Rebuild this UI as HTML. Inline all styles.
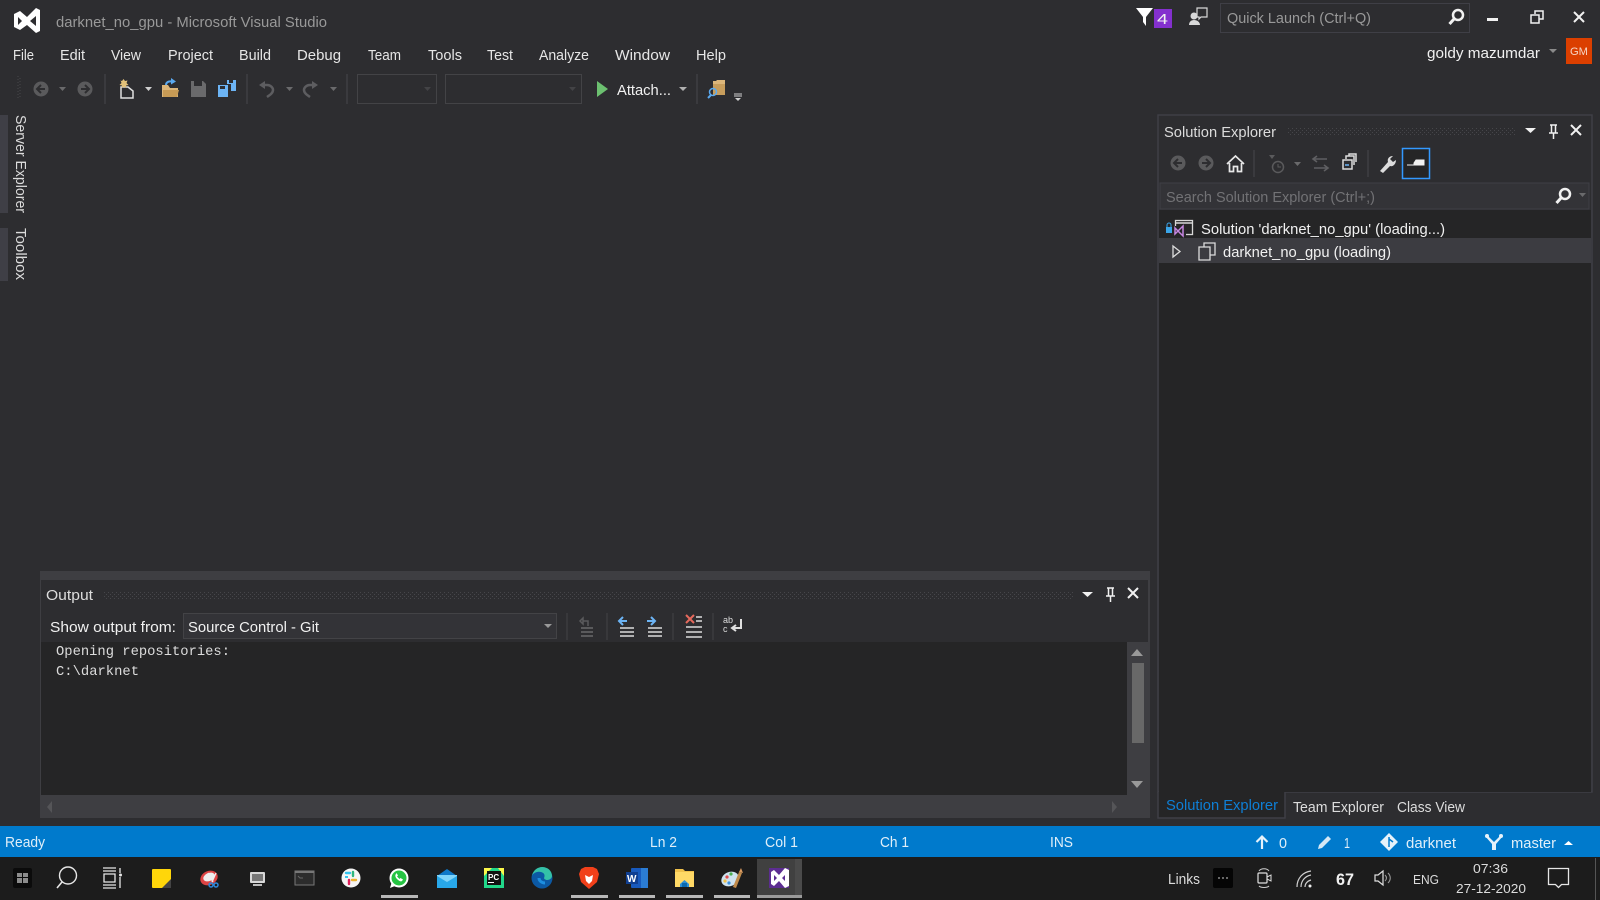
<!DOCTYPE html>
<html><head><meta charset="utf-8"><title>darknet_no_gpu - Microsoft Visual Studio</title>
<style>
html,body{margin:0;padding:0;background:#2d2d30;width:1600px;height:900px;overflow:hidden}
svg{display:block}
text{font-family:"Liberation Sans",sans-serif;font-size:15px;fill:#f1f1f1}
.m{fill:#e6e6e6}
.g{fill:#999}
.w{fill:#f1f1f1}
.d{fill:#dcdcdc}
.s{fill:#fff;fill-opacity:.88}
.t{fill:#e8e8e8}
.mono{font-family:"Liberation Mono",monospace;font-size:14px;fill:#dcdcdc}
</style></head><body>
<svg xmlns="http://www.w3.org/2000/svg" width="1600" height="900" viewBox="0 0 1600 900">
<defs>
<pattern id="dots" width="4" height="4" patternUnits="userSpaceOnUse"><rect width="1" height="1" fill="#46464a"/><rect x="2" y="2" width="1" height="1" fill="#46464a"/></pattern>
</defs>
<rect width="1600" height="900" fill="#2d2d30"/>

<!-- title -->
<path fill="#fff" fill-rule="evenodd" d="M14 14L20 11L27 17L36 8L40 10V31L36 33L27 25L20 30L14 27ZM18 17V25L22 21ZM30 21L36 26V16Z"/>
<text x="56" y="27" class="g" textLength="271" lengthAdjust="spacingAndGlyphs">darknet_no_gpu - Microsoft Visual Studio</text>

<!-- menu -->
<g class="m">
<text class="m" x="13" y="60" textLength="21" lengthAdjust="spacingAndGlyphs">File</text>
<text class="m" x="60" y="60" textLength="25" lengthAdjust="spacingAndGlyphs">Edit</text>
<text class="m" x="111" y="60" textLength="30" lengthAdjust="spacingAndGlyphs">View</text>
<text class="m" x="168" y="60" textLength="45" lengthAdjust="spacingAndGlyphs">Project</text>
<text class="m" x="239" y="60" textLength="32" lengthAdjust="spacingAndGlyphs">Build</text>
<text class="m" x="297" y="60" textLength="44" lengthAdjust="spacingAndGlyphs">Debug</text>
<text class="m" x="368" y="60" textLength="33" lengthAdjust="spacingAndGlyphs">Team</text>
<text class="m" x="428" y="60" textLength="34" lengthAdjust="spacingAndGlyphs">Tools</text>
<text class="m" x="487" y="60" textLength="26" lengthAdjust="spacingAndGlyphs">Test</text>
<text class="m" x="539" y="60" textLength="50" lengthAdjust="spacingAndGlyphs">Analyze</text>
<text class="m" x="615" y="60" textLength="55" lengthAdjust="spacingAndGlyphs">Window</text>
<text class="m" x="696" y="60" textLength="30" lengthAdjust="spacingAndGlyphs">Help</text>
</g>

<!-- main toolbar -->
<path d="M18 76v24M20 78v20" stroke="#46464a" stroke-width="1" stroke-dasharray="1 2"/>
<circle cx="41" cy="89" r="7.5" fill="#5a5a5c"/><path d="M45 89h-7M41 85l-4 4 4 4" stroke="#2d2d30" stroke-width="2" fill="none"/>
<path d="M59 87h7l-3.500 4z" fill="#6a6a6c"/>
<circle cx="85" cy="89" r="7.500" fill="#5a5a5c"/><path d="M81 89h7M85 85l4 4-4 4" stroke="#2d2d30" stroke-width="2" fill="none"/>
<path d="M105 74v30M347 74v30M697 74v30M247 74v30" stroke="#47474b"/>
<!-- new project -->
<path d="M121 87h7l5 4v7h-12z" fill="none" stroke="#e0e0e0" stroke-width="1.500"/>
<path d="M122 81l1.500-2 1.500 2 2.500-.5-1 2.500 2 2-2.500.5.3 2.500-2.300-1.200-2.300 1.200.3-2.500-2.500-.5 2-2-1-2.500z" fill="#e3c27a"/>
<path d="M145 87h7l-3.500 4z" fill="#d0d0d0"/>
<!-- open -->
<path d="M162 85h6l2 3h8v9h-16z" fill="#dcb67a"/><path d="M163 90h16l-2 7h-14z" fill="#c69a55"/>
<path d="M166 85c0-3 3-4 6-3.500" fill="none" stroke="#5aa9f0" stroke-width="2"/><path d="M171 78l5 3.500-5 3z" fill="#5aa9f0"/>
<!-- save -->
<path d="M191 81h12l3 3v13h-15z" fill="#6a6a6c"/><rect x="194" y="81" width="8" height="5" fill="#2d2d30"/>
<!-- save all -->
<path d="M218 85h10v12h-10z" fill="#6cb4f5"/><path d="M227 80h9v11h-5v-7h-4z" fill="#6cb4f5"/><rect x="220" y="86" width="5" height="3" fill="#2d2d30"/><rect x="229" y="80" width="4" height="3" fill="#2d2d30"/>
<!-- undo redo -->
<path d="M261 85h6c4 0 6 3 6 5 0 3-3 5-6 7" fill="none" stroke="#5d5d60" stroke-width="2.500"/><path d="M265 81l-6 4 6 4z" fill="#5d5d60"/>
<path d="M286 87h7l-3.500 4z" fill="#6a6a6c"/>
<path d="M316 85h-6c-4 0-6 3-6 5 0 3 3 5 6 7" fill="none" stroke="#5d5d60" stroke-width="2.500"/><path d="M312 81l6 4-6 4z" fill="#5d5d60"/>
<path d="M330 87h7l-3.500 4z" fill="#6a6a6c"/>
<!-- combos -->
<rect x="357.500" y="74.500" width="79" height="29" fill="none" stroke="#434346"/>
<path d="M424 87h7l-3.500 4z" fill="#434346"/>
<rect x="445.500" y="74.500" width="136" height="29" fill="none" stroke="#434346"/>
<path d="M569 87h7l-3.500 4z" fill="#434346"/>
<path d="M597 81l11 8-11 8z" fill="#6cc070"/>
<text x="617" y="95" class="w" textLength="54" lengthAdjust="spacingAndGlyphs">Attach...</text>
<path d="M679 87h8l-4 4z" fill="#b0b0b0"/>
<!-- find -->
<path d="M713 81h3l1-1h8v15h-12z" fill="#dcb67a"/><path d="M713 84h12v11h-12z" fill="#c79d5c"/>
<circle cx="713" cy="92" r="3.500" fill="none" stroke="#5aa9f0" stroke-width="1.500"/><path d="M711 95l-3 3" stroke="#5aa9f0" stroke-width="2"/>
<path d="M734 94h8M734 96h8" stroke="#d0d0d0" stroke-width="1"/><path d="M735 98h6l-3 3z" fill="#d0d0d0"/>

<!-- top right -->
<path d="M1136 8h17l-7 9v9l-3-4v-5z" fill="#fff"/>
<rect x="1154" y="9" width="18" height="19" fill="#8430ce"/>
<text x="1157" y="24" style="font-size:15px" class="w" textLength="11" lengthAdjust="spacingAndGlyphs">4</text>
<path d="M1197 8h10v9h-6l-2 2v-2h-2z" fill="none" stroke="#d8d8d8" stroke-width="1.200"/>
<circle cx="1194" cy="16" r="3.500" fill="#d8d8d8"/><path d="M1189 25c0-3 2-5 5-5s6 2 6 5z" fill="#d8d8d8"/>
<rect x="1220.500" y="3.500" width="249" height="29" fill="#2d2d30" stroke="#3f3f46"/>
<text x="1227" y="23" class="g" textLength="144" lengthAdjust="spacingAndGlyphs">Quick Launch (Ctrl+Q)</text>
<circle cx="1458" cy="15" r="5" fill="none" stroke="#f1f1f1" stroke-width="2.500"/><path d="M1454 19l-4.500 5" stroke="#f1f1f1" stroke-width="3"/>
<rect x="1487" y="18" width="11" height="3" fill="#f1f1f1"/>
<path d="M1531 15h8v8h-8zM1535 14v-3h8v8h-4" fill="none" stroke="#f1f1f1" stroke-width="1.500"/>
<path d="M1574 12l10 10M1584 12l-10 10" stroke="#f1f1f1" stroke-width="2"/>
<text x="1427" y="58" class="w" textLength="113" lengthAdjust="spacingAndGlyphs">goldy mazumdar</text>
<path d="M1549 49h8l-4 4z" fill="#8a8a8a"/>
<rect x="1566" y="38" width="26" height="26" fill="#db3f00"/>
<text x="1570" y="55" style="font-size:11px;fill:#f5d5c5" textLength="18" lengthAdjust="spacingAndGlyphs">GM</text>

<!-- left rail -->
<rect x="0" y="115" width="8" height="98" fill="#3f3f46"/>
<rect x="0" y="228" width="8" height="53" fill="#3f3f46"/>
<text transform="translate(16 115) rotate(90)" class="d" textLength="98" lengthAdjust="spacingAndGlyphs">Server Explorer</text>
<text transform="translate(16 228) rotate(90)" class="d" textLength="52" lengthAdjust="spacingAndGlyphs">Toolbox</text>

<!-- output panel -->
<rect x="40" y="571" width="1110" height="247" fill="#3e3e42"/>
<rect x="41" y="580" width="1107" height="62" fill="#2d2d30"/>
<rect x="41" y="642" width="1086" height="153" fill="#252526"/>
<text x="46" y="600" class="d" textLength="47" lengthAdjust="spacingAndGlyphs">Output</text>
<rect x="103" y="591" width="970" height="8" fill="url(#dots)"/>
<path d="M1082 592h11l-5.500 5z" fill="#f1f1f1"/>
<path d="M1107 588h7M1108.500 588v8h4v-8M1106 596h9M1110.500 596v6" fill="none" stroke="#f1f1f1" stroke-width="1.500"/>
<path d="M1128 588l10 10M1138 588l-10 10" stroke="#f1f1f1" stroke-width="2"/>
<text x="50" y="632" class="w" textLength="126" lengthAdjust="spacingAndGlyphs">Show output from:</text>
<rect x="183.500" y="613.500" width="373" height="25" fill="#333337" stroke="#434346"/>
<text x="188" y="632" class="w" textLength="131" lengthAdjust="spacingAndGlyphs">Source Control - Git</text>
<path d="M544 624h8l-4 4z" fill="#999"/>
<path d="M567 613v27M607 613v27M673 613v27M713 613v27" stroke="#434346"/>
<!-- output icons -->
<path d="M583 621v-3l-3 3 3 3v-3h5v5" fill="none" stroke="#5a5a5c" stroke-width="1.500"/><path d="M581 628h12M581 632h12M581 636h12" stroke="#5a5a5c" stroke-width="2"/>
<path d="M619 621h8M623 617l-4 4 4 4" fill="none" stroke="#6cb4f5" stroke-width="2"/><path d="M620 628h14M620 632h14M620 636h14" stroke="#dcdcdc" stroke-width="1.500"/>
<path d="M647 621h8M651 617l4 4-4 4" fill="none" stroke="#6cb4f5" stroke-width="2"/><path d="M648 628h14M648 632h14M648 636h14" stroke="#dcdcdc" stroke-width="1.500"/>
<path d="M686 615l8 8M694 615l-8 8" stroke="#e5695c" stroke-width="2"/><path d="M696 617h6M696 621h6M686 627h16M686 632h16M686 637h16" stroke="#dcdcdc" stroke-width="1.600"/>
<text x="723" y="623" style="font-size:9px" class="d">ab</text><text x="723" y="632" style="font-size:9px" class="d">c</text>
<path d="M741 619v9h-8M736 625l-4 3 4 3" fill="none" stroke="#e0e0e0" stroke-width="2"/>
<text x="56" y="655" class="mono" textLength="174" lengthAdjust="spacingAndGlyphs">Opening repositories:</text>
<text x="56" y="675" class="mono" textLength="83" lengthAdjust="spacingAndGlyphs">C:\darknet</text>
<!-- scrollbars -->
<rect x="1132" y="663" width="12" height="80" fill="#686868"/>
<path d="M1131 656l6-7 6 7z" fill="#999"/>
<path d="M1131 781h12l-6 7z" fill="#999"/>
<path d="M52 801v12l-5-6zM1112 801v12l5-6z" fill="#555558"/>

<!-- solution explorer -->
<rect x="1158" y="115" width="434" height="677" fill="#2d2d30" stroke="#3f3f46" stroke-width="1.500"/>
<rect x="1159" y="210" width="432" height="582" fill="#252526"/>
<text x="1164" y="137" class="d" textLength="112" lengthAdjust="spacingAndGlyphs">Solution Explorer</text>
<rect x="1287" y="127" width="228" height="8" fill="url(#dots)"/>
<path d="M1525 128h11l-5.500 5z" fill="#f1f1f1"/>
<path d="M1550 125h7M1551.500 125v8h4v-8M1549 133h9M1553.500 133v6" fill="none" stroke="#f1f1f1" stroke-width="1.500"/>
<path d="M1571 125l10 10M1581 125l-10 10" stroke="#f1f1f1" stroke-width="2"/>
<!-- se toolbar -->
<circle cx="1178" cy="163" r="7.500" fill="#5a5a5c"/><path d="M1182 163h-7M1178 159l-4 4 4 4" stroke="#2d2d30" stroke-width="2" fill="none"/>
<circle cx="1206" cy="163" r="7.500" fill="#5a5a5c"/><path d="M1202 163h7M1206 159l4 4-4 4" stroke="#2d2d30" stroke-width="2" fill="none"/>
<path d="M1227 164l8.500-8 8.500 8M1229.500 163v8.500h4v-5h4v5h4v-8.500" fill="none" stroke="#e8e8e8" stroke-width="1.700"/>
<path d="M1254 150v27M1368 150v27" stroke="#47474b"/>
<circle cx="1278" cy="167" r="5.500" fill="none" stroke="#5a5a5c" stroke-width="1.500"/><path d="M1278 164v3h3" fill="none" stroke="#5a5a5c"/><path d="M1269 155h6l-3 4z" fill="#5a5a5c"/>
<path d="M1294 162h7l-3.500 4z" fill="#6a6a6c"/>
<path d="M1314 159h13M1317 156l-4 3 4 3M1327 168h-13M1324 165l4 3-4 3" fill="none" stroke="#5f5f62" stroke-width="1.600"/>
<path d="M1343 160h9v9h-9zM1346 159v-3h8v9M1349 156v-2h7v8" fill="none" stroke="#dcdcdc" stroke-width="1.500"/><path d="M1345 165h4" stroke="#6cb4f5" stroke-width="1.500"/>
<path d="M1380 171l8-9c-1-3 1-6 5-6l-3 3 3 3 3-2c0 4-3 7-6 6l-7 7z" fill="#dcdcdc"/>
<rect x="1402.500" y="148.500" width="27" height="30" fill="#252526" stroke="#3399ff" stroke-width="1.500"/>
<path d="M1407 165h17M1414 165v-2l2-3h8v5z" stroke="#f1f1f1" fill="#f1f1f1" stroke-width="1"/>
<!-- search -->
<rect x="1160" y="183" width="429" height="26" fill="#333337" stroke="#3f3f46"/>
<text x="1166" y="202" style="fill:#727275" textLength="209" lengthAdjust="spacingAndGlyphs">Search Solution Explorer (Ctrl+;)</text>
<circle cx="1565" cy="194" r="5" fill="none" stroke="#f1f1f1" stroke-width="2.500"/><path d="M1561 198l-4.500 5" stroke="#f1f1f1" stroke-width="3"/>
<path d="M1579 193h7l-3.500 4z" fill="#6a6a6c"/>
<!-- tree -->
<rect x="1159" y="238" width="432" height="25" fill="#3c3c41"/>
<rect x="1175.500" y="220.500" width="17" height="14" fill="none" stroke="#d8d8d8" stroke-width="1.300"/><path d="M1176 223h17" stroke="#d8d8d8" stroke-width="1.500"/>
<rect x="1166" y="227" width="6" height="6" fill="#3aa5e8"/><path d="M1167 227v-2a2 2 0 0 1 4 0v2" fill="none" stroke="#3aa5e8"/>
<rect x="1175" y="226" width="11" height="10" fill="#252526"/>
<path d="M1175 228l3 3 5-5v10l-5-5-3 3z" fill="none" stroke="#c586e0" stroke-width="1.500"/>
<text x="1201" y="234" class="w" textLength="244" lengthAdjust="spacingAndGlyphs">Solution 'darknet_no_gpu' (loading...)</text>
<path d="M1173 246l7 5.500-7 5.500z" fill="none" stroke="#dcdcdc" stroke-width="1.300"/>
<path d="M1199 247h11v13h-11zM1204 247v-4h11v12h-5" fill="none" stroke="#dcdcdc" stroke-width="1.300"/>
<text x="1223" y="257" class="w" textLength="168" lengthAdjust="spacingAndGlyphs">darknet_no_gpu (loading)</text>
<!-- tabs -->
<rect x="1158" y="792" width="127" height="26" fill="#252526"/>
<path d="M1158 792v26h127v-26" fill="none" stroke="#3f3f46" stroke-width="1.500"/>
<rect x="1159" y="790" width="125" height="4" fill="#252526"/>
<text x="1166" y="810" style="fill:#0e7fd6" textLength="112" lengthAdjust="spacingAndGlyphs">Solution Explorer</text>
<text x="1293" y="812" class="d" textLength="91" lengthAdjust="spacingAndGlyphs">Team Explorer</text>
<text x="1397" y="812" class="d" textLength="68" lengthAdjust="spacingAndGlyphs">Class View</text>

<!-- status bar -->
<rect x="0" y="826" width="1600" height="31" fill="#007acc"/>
<text x="5" y="847" class="s" textLength="40" lengthAdjust="spacingAndGlyphs">Ready</text>
<text x="650" y="847" class="s" textLength="27" lengthAdjust="spacingAndGlyphs">Ln 2</text>
<text x="765" y="847" class="s" textLength="33" lengthAdjust="spacingAndGlyphs">Col 1</text>
<text x="880" y="847" class="s" textLength="29" lengthAdjust="spacingAndGlyphs">Ch 1</text>
<text x="1050" y="847" class="s" textLength="23" lengthAdjust="spacingAndGlyphs">INS</text>
<path d="M1262 849v-12M1256.500 842l5.500-5.500 5.500 5.500" fill="none" stroke="#e6f2fa" stroke-width="2.200"/>
<text x="1279" y="848" class="s" textLength="8" lengthAdjust="spacingAndGlyphs">0</text>
<path d="M1319 845l9-9 3 3-9 9-4 1z" fill="#d5e8f5"/>
<text x="1344" y="848" class="s" textLength="6" lengthAdjust="spacingAndGlyphs">1</text>
<path d="M1389 833l9 9-9 9-9-9z" fill="#e6f2fa"/><path d="M1389 837v10M1389 839l4 3" stroke="#007acc" stroke-width="1.500" fill="none"/>
<text x="1406" y="848" class="s" textLength="50" lengthAdjust="spacingAndGlyphs">darknet</text>
<path d="M1488 836l6 6 6-6h3l-7 8v6h-4v-6l-7-8z" fill="#e6f2fa"/><circle cx="1487" cy="836" r="2" fill="#e6f2fa"/><circle cx="1501" cy="836" r="2" fill="#e6f2fa"/>
<text x="1511" y="848" class="s" textLength="45" lengthAdjust="spacingAndGlyphs">master</text>
<path d="M1564 845l4.500-4 4.500 4z" fill="#fff"/>

<!-- taskbar -->
<rect x="0" y="857" width="1600" height="43" fill="#1c1c1c"/>
<rect x="757" y="859" width="45" height="39" fill="#404040"/>
<rect x="795" y="859" width="7" height="39" fill="#4a4a4a"/>
<g fill="#b8b8b8">
<rect x="381" y="895" width="37" height="3"/><rect x="571" y="895" width="37" height="3"/><rect x="619" y="895" width="36" height="3"/><rect x="666" y="895" width="37" height="3"/><rect x="714" y="895" width="36" height="3"/><rect x="757" y="895" width="45" height="3" fill="#9a9a9a"/>
</g>
<!-- start -->
<rect x="13" y="868" width="19" height="20" rx="2" fill="#0b0b0b"/>
<path d="M17 873h5v4h-5zM23 873h5v4h-5zM17 878h5v5h-5zM23 878h5v5h-5z" fill="#8c8c8c"/>
<circle cx="68" cy="875.500" r="8.500" fill="none" stroke="#e6e6e6" stroke-width="1.400"/><path d="M62 882l-5 6" stroke="#e6e6e6" stroke-width="1.600"/>
<path d="M103 868h13M103 871h13M103 885h13M103 888h13M104 874h11v8h-11zM120 868v5M120 877v11" fill="none" stroke="#e6e6e6" stroke-width="1.300"/><circle cx="120.500" cy="875" r="1.500" fill="#e6e6e6"/>
<!-- sticky -->
<rect x="152" y="869" width="19" height="19" rx="1" fill="#ffd60a"/><path d="M162 888l9-9v9z" fill="#444"/>
<!-- snip -->
<ellipse cx="209" cy="878" rx="9" ry="7" fill="#d44" transform="rotate(-25 209 878)"/><ellipse cx="209" cy="877" rx="6" ry="4" fill="#eee" transform="rotate(-25 209 877)"/>
<path d="M208 873l5 9M216 873l-4 9" stroke="#eee" stroke-width="1.300"/><circle cx="211" cy="885" r="2" fill="none" stroke="#2e86d8" stroke-width="1.500"/><circle cx="216" cy="885" r="2" fill="none" stroke="#2e86d8" stroke-width="1.500"/>
<!-- monitor -->
<rect x="250" y="872" width="15" height="11" rx="1" fill="#d8d8d8"/><rect x="252" y="874" width="11" height="7" fill="#777"/><rect x="253" y="884" width="9" height="2" fill="#bbb"/>
<!-- terminal -->
<rect x="295" y="871" width="19" height="14" fill="#2c2c2c" stroke="#777"/><path d="M295 871h19v2h-19z" fill="#777"/><path d="M298 876l2 2h3" stroke="#666" fill="none"/>
<!-- slack -->
<circle cx="351" cy="878" r="9.500" fill="#f5f5f5"/>
<path d="M350 873h-4" stroke="#36c5f0" stroke-width="2.400" stroke-linecap="round"/><path d="M353 872v4" stroke="#2eb67d" stroke-width="2.400" stroke-linecap="round"/><path d="M352 880h4" stroke="#ecb22e" stroke-width="2.400" stroke-linecap="round"/><path d="M349 880v4" stroke="#e01e5a" stroke-width="2.400" stroke-linecap="round"/><path d="M345 877h3" stroke="#36c5f0" stroke-width="2"/>
<!-- whatsapp -->
<circle cx="399" cy="878" r="9.500" fill="#fff"/><circle cx="399" cy="878" r="7.500" fill="#26c443"/><path d="M390 888l1.500-5 3.500 3z" fill="#fff"/>
<path d="M396 874c-1 1-1 3 1 5s4 3 5 2l1-1.500-2.500-1.500-1 1-2.500-2.500 1-1-1.500-2.500z" fill="#fff"/>
<!-- mail -->
<path d="M437 876l10-7 10 7v12h-20z" fill="#0e78c8"/><path d="M437 876l10 7 10-7v-1h-20z" fill="#7fd4fa"/><path d="M437 876l10 6 10-6v12h-20z" fill="#28a8ea"/>
<!-- pycharm -->
<rect x="484" y="868" width="20" height="20" fill="#21d789"/><path d="M484 868h8l-8 8zM504 868v8l-6-8z" fill="#fcf84a"/><rect x="487" y="871" width="14" height="14" fill="#111"/>
<text x="488" y="880" style="font-size:8px;font-weight:bold;fill:#fff">PC</text><rect x="488" y="882" width="6" height="1" fill="#fff"/>
<!-- edge -->
<circle cx="542" cy="878" r="10.500" fill="#0c59a4"/><path d="M532 876c1-6 6-9 10-9 6 0 10 4 10 9 0 2-2 4-5 4-1 0-3-1-3-2 1-2 1-5-3-6-4-1-8 1-9 4z" fill="#34c1a8"/><path d="M539 878c0 3 3 5 6 5" stroke="#1d8fe0" stroke-width="3" fill="none"/>
<!-- brave -->
<path d="M581 869l4-2h8l4 2 2 5-2 8-8 7-8-7-2-8z" fill="#f1401a"/><path d="M585 875l4 2 4-2-1 6-3 3-3-3z" fill="#fff"/>
<!-- word -->
<rect x="631" y="868" width="17" height="20" rx="1" fill="#185abd"/><rect x="641" y="868" width="7" height="20" fill="#2b7cd3"/><rect x="626" y="872" width="12" height="12" fill="#103f91"/>
<text x="627" y="882" style="font-size:10px;font-weight:bold;fill:#fff">W</text>
<!-- folder -->
<path d="M675 869h8l2 2h9v16h-19z" fill="#f0c14b"/><path d="M675 872h19v15h-19z" fill="#ffd966"/><path d="M680 884l4.500-4 4.500 4v3h-9z" fill="#2d8fd5"/><rect x="682" y="883" width="5" height="4" fill="#0a6ab0"/>
<!-- paint -->
<ellipse cx="730" cy="879" rx="9" ry="7" fill="#cfe3ef" transform="rotate(-25 730 879)"/><circle cx="727" cy="877" r="1.600" fill="#e04c4c"/><circle cx="731" cy="874" r="1.600" fill="#4caf50"/><circle cx="725" cy="881" r="1.600" fill="#f0c14b"/><circle cx="729" cy="883" r="1.600" fill="#3a8fdd"/>
<path d="M733 887l6-15 3 1-6 15z" fill="#c08a4a"/><path d="M739 872l2-4 2 5z" fill="#d99b62"/>
<!-- vs -->
<rect x="769" y="868" width="20" height="20" fill="#5c2d91"/>
<path fill="#fff" fill-rule="evenodd" d="M771 872L774 870L779 875L785 868L789 870V886L785 888L779 881L774 886L771 884ZM774 875V881L777 878ZM782 878L785 881V875Z"/>

<!-- tray -->
<text x="1168" y="884" class="d" textLength="32" lengthAdjust="spacingAndGlyphs">Links</text>
<rect x="1213" y="868" width="20" height="20" rx="2" fill="#050505"/>
<path d="M1218 878h2M1222 878h2M1226 878h2" stroke="#888" stroke-width="1.500"/>
<rect x="1258" y="873" width="9" height="10" rx="1" fill="none" stroke="#e0e0e0" stroke-width="1.200"/><path d="M1267 877l4-2v6l-4-2z" fill="none" stroke="#e0e0e0"/><path d="M1259 871c2-3 8-3 10 0M1259 886c2 2 8 2 10 0" stroke="#cfcfcf" fill="none"/>
<path d="M1297 887c0-9 6-15 14-16M1301 887c0-6 4-11 10-12M1305 887c0-3 2-6 6-7" fill="none" stroke="#cfcfcf" stroke-width="1.200"/><circle cx="1310" cy="886" r="1.500" fill="#eee"/>
<text x="1336" y="885" style="font-size:17px;font-weight:bold;fill:#f1f1f1" textLength="18" lengthAdjust="spacingAndGlyphs">67</text>
<path d="M1375 875h3l5-4v14l-5-4h-3z" fill="none" stroke="#e0e0e0" stroke-width="1.200"/><path d="M1385 875c2 2 2 4 0 6M1388 873c3 3 3 7 0 10" fill="none" stroke="#9a9a9a" stroke-width="1.100"/>
<text x="1413" y="884" style="font-size:13px" class="d" textLength="26" lengthAdjust="spacingAndGlyphs">ENG</text>
<text x="1473" y="873" style="font-size:13px" class="d" textLength="35" lengthAdjust="spacingAndGlyphs">07:36</text>
<text x="1456" y="893" style="font-size:13px" class="d" textLength="70" lengthAdjust="spacingAndGlyphs">27-12-2020</text>
<path d="M1548.500 868.500h20v16h-7l-3 3-3-3h-7z" fill="none" stroke="#e6e6e6" stroke-width="1.300"/>
<rect x="1595" y="858" width="1" height="42" fill="#555"/>
</svg>
</body></html>
